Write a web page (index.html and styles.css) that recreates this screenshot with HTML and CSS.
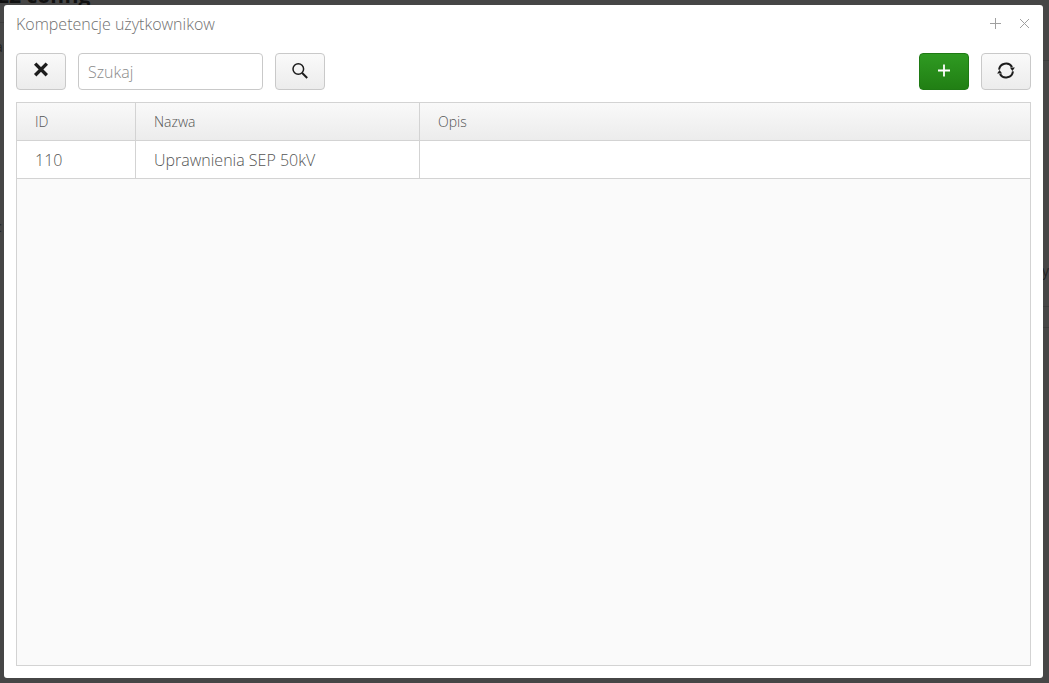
FILE: index.html
```html
<!DOCTYPE html>
<html lang="pl">
<head>
<meta charset="utf-8">
<title>Kompetencje użytkownikow</title>
<link rel="stylesheet" href="styles.css">
</head>
<body>
<div class="backdrop">
  <span class="bg-heading">22 config</span>
  <span class="bg-letter bg-a">a</span>
  <span class="bg-letter bg-c">c</span>
  <span class="bg-letter bg-y">y</span>
  <span class="bg-line bg-l1"></span>
  <span class="bg-line bg-l2"></span>
  <span class="bg-line bg-l3"></span>
  <span class="bg-line bg-l4"></span>
</div>
<main class="dialog">
  <header class="titlebar">
    <h1 class="title">Kompetencje użytkownikow</h1>
    <div class="win-actions">
      <svg class="win-icon" viewBox="0 0 11 11"><path d="M5.5 0v11M0 5.5h11"/></svg>
      <svg class="win-icon" viewBox="0 0 11 11"><path d="M1 1l9 9M10 1L1 10"/></svg>
    </div>
  </header>
  <div class="toolbar">
    <button class="btn" aria-label="Zamknij">
      <svg class="ico" viewBox="0 0 18 18"><path class="x" d="M3.2.6l11.6 11.6M14.8.6L3.2 12.2"/></svg>
    </button>
    <input class="search" type="text" placeholder="Szukaj">
    <button class="btn" aria-label="Szukaj">
      <svg class="ico" viewBox="0 0 18 18"><circle class="s thin" cx="7.3" cy="6" r="5.3"/><path class="s" d="M11.2 10l5 5"/></svg>
    </button>
    <div class="spacer"></div>
    <button class="btn btn-green" aria-label="Dodaj">
      <svg class="ico" viewBox="0 0 18 18"><path class="plus" d="M9 1.5v12M3 7.5h12"/></svg>
    </button>
    <button class="btn" aria-label="Odśwież">
      <svg class="ico" viewBox="0 0 18 18"><path class="s" d="M2.05 6.7A7 7 0 0 1 15.06 4M15.95 8.3A7 7 0 0 1 2.94 11"/><path class="f" d="M12.9 4.4h5l-2.5 3.6zM5.1 10.6h-5L2.6 7z"/></svg>
    </button>
  </div>
  <section class="grid">
    <div class="row head">
      <div class="cell c-id">ID</div>
      <div class="cell c-name">Nazwa</div>
      <div class="cell c-desc">Opis</div>
    </div>
    <div class="row data">
      <div class="cell c-id">110</div>
      <div class="cell c-name">Uprawnienia SEP 50kV</div>
      <div class="cell c-desc"></div>
    </div>
  </section>
</main>
</body>
</html>
```
FILE: styles.css
```css
* { box-sizing: border-box; }
html, body { margin: 0; height: 100%; overflow: hidden; }
body {
  background: #464646;
  font-family: "Open Sans", sans-serif;
  padding: 5px 6px 5px 4px;
  display: flex;
}
.backdrop { position: absolute; inset: 0; overflow: hidden; }
.bg-heading { position: absolute; left: -3px; top: -18px; font: 700 21px/26px "Open Sans", sans-serif; color: #111; }
.bg-letter { position: absolute; color: #222; font-size: 14px; line-height: 18px; }
.bg-a { left: -5px; top: 38px; }
.bg-c { left: -5px; top: 218px; }
.bg-y { left: 1042px; top: 262px; }
.bg-line { position: absolute; height: 1px; background: #3c3c3c; }
.bg-l1 { left: 0; width: 4px; top: 22px; }
.bg-l2 { left: 1043px; width: 6px; top: 306px; }
.bg-l3 { left: 1043px; width: 6px; top: 327px; }
.bg-l4 { left: 1043px; width: 6px; top: 60px; }

.dialog {
  position: relative;
  flex: 1;
  background: #fff;
  border-radius: 3px;
  padding: 0 12px 12px;
  display: flex;
  flex-direction: column;
}
.titlebar {
  height: 38px;
  display: flex;
  align-items: center;
  justify-content: space-between;
  padding-right: 1px;
}
.title {
  margin: 0;
  font-size: 16px;
  font-weight: 300;
  color: #707070;
  margin-top: -1px;
}
.win-actions { display: flex; gap: 18px; margin-top: -1px; }
.win-icon { width: 11px; height: 11px; fill: none; stroke: #a0a0a0; stroke-width: 1; display: block; }

.toolbar { display: flex; gap: 12px; margin-top: 10px; height: 37px; }
.spacer { flex: 1; }
.btn {
  width: 50px;
  height: 37px;
  padding: 0;
  border: 1px solid #c9c9c9;
  border-radius: 4px;
  background: linear-gradient(#fafafa, #ececec);
  display: flex;
  align-items: center;
  justify-content: center;
}
.btn-green {
  background: linear-gradient(#2f9a22, #217f14);
  border-color: #1f7a14;
}
.ico { width: 18px; height: 18px; display: block; overflow: visible; }
.x { stroke: #1c1c1c; stroke-width: 3.4; fill: none; }
.s { stroke: #1c1c1c; stroke-width: 2; fill: none; }
.thin { stroke-width: 1.5; }
.f { fill: #1c1c1c; }
.plus { stroke: #fff; stroke-width: 1.8; fill: none; }
.search {
  width: 185px;
  height: 37px;
  border: 1px solid #c9c9c9;
  border-radius: 4px;
  padding: 0 9px;
  font: 300 16px "Open Sans", sans-serif;
  color: #555;
  outline: none;
}
.search::placeholder { color: #8a8a8a; opacity: 1; }

.grid {
  flex: 1;
  margin-top: 12px;
  border: 1px solid #d3d3d3;
  background: #fafafa;
}
.row { display: flex; border-bottom: 1px solid #d3d3d3; }
.head { height: 38px; background: linear-gradient(#f9f9f9, #ececec); font-size: 14px; }
.data { height: 38px; background: #fff; font-size: 16px; }
.cell {
  display: flex;
  align-items: center;
  padding-left: 18px;
  font-weight: 300;
  color: #555;
  border-right: 1px solid #d3d3d3;
}
.c-id { width: 119px; }
.c-name { width: 284px; }
.c-desc { flex: 1; border-right: 0; }
```
